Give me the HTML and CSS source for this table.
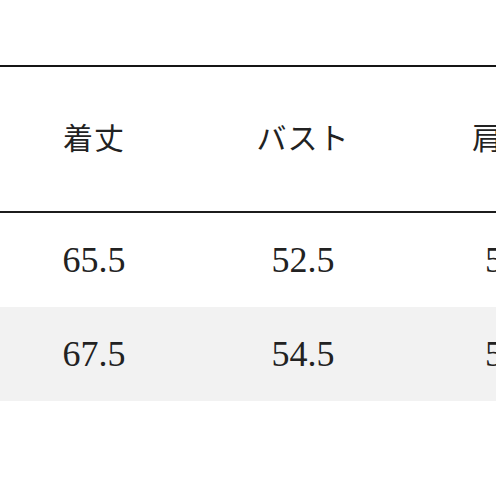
FILE: index.html
```html
<!DOCTYPE html>
<html lang="ja">
<head>
<meta charset="utf-8">
<link rel="stylesheet" href="styles.css">
</head>
<body>
<div class="sheet">
  <div class="row head">
    <div class="cell c1">着丈</div>
    <div class="cell c2">バスト</div>
    <div class="cell c3 h3">肩幅</div>
  </div>
  <div class="row data">
    <div class="cell c1">65.5</div>
    <div class="cell c2">52.5</div>
    <div class="cell c3 n3">50.5</div>
  </div>
  <div class="row data alt">
    <div class="cell c1">67.5</div>
    <div class="cell c2">54.5</div>
    <div class="cell c3 n3">52.5</div>
  </div>
</div>
</body>
</html>
```
FILE: styles.css
```css
html, body {
  margin: 0;
  padding: 0;
  background: #fff;
  overflow: hidden;
}
.sheet {
  padding-top: 65px;
  width: 720px;
}
.row {
  display: grid;
  grid-template-columns: 188px 230px 1fr;
  align-items: center;
  color: #222;
}
.head {
  height: 138px;
  padding-bottom: 6px;
  border-top: 2px solid #151515;
  border-bottom: 2px solid #1c1c1c;
  font-family: "Noto Sans CJK JP", "Noto Sans", sans-serif;
  font-size: 30px;
  font-weight: 400;
  letter-spacing: 1px;
}
.data {
  height: 94px;
  font-family: "Liberation Serif", serif;
  font-size: 36px;
}
.alt {
  background: #f2f2f2;
}
.cell {
  line-height: 1;
  white-space: nowrap;
}
.c1, .c2 {
  text-align: center;
}
.h3 {
  padding-left: 54px;
}
.n3 {
  padding-left: 67px;
}
```
